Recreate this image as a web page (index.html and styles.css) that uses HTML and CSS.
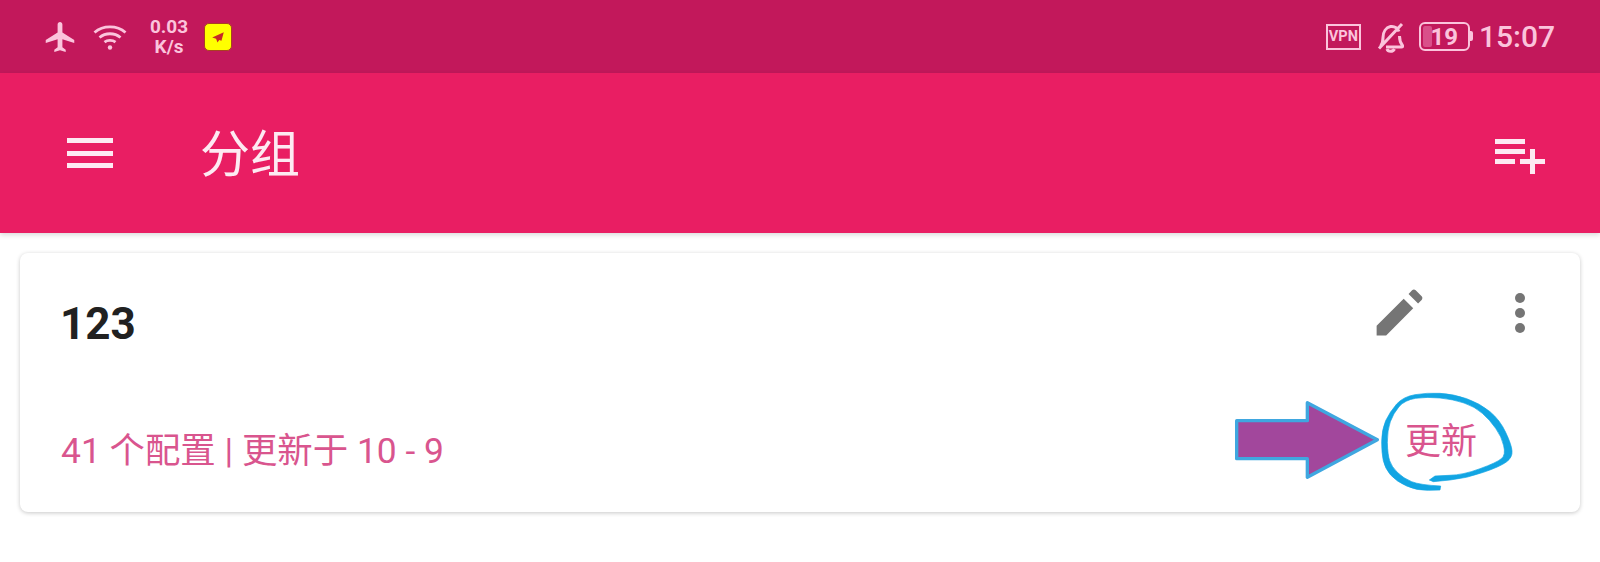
FILE: index.html
```html
<!DOCTYPE html>
<html>
<head>
    <title>分组</title>
    <meta charset="utf-8">
    <link rel="stylesheet" href="styles.css">
</head>
<body>
    <div class="status-bar">
        <div class="status-left">
            <svg class="ic-plane" viewBox="0 0 24 24"><path d="M21.500 16v-2L13.600 9V3.600c0-.9-.7-1.600-1.600-1.600s-1.600.7-1.600 1.600V9L2.500 14v2l7.900-2.500v5.400l-2.200 1.600V22l3.800-1.100 3.800 1.100v-1.500l-2.200-1.600v-5.400z"/></svg>
            <svg class="ic-wifi" viewBox="0 0 34 26">
                <path d="M1.500 8.500C10 1 24 1 32.500 8.500M6.500 13.500C12.500 8.500 21.500 8.500 27.500 13.500M11.500 18.200C14.500 15.800 19.500 15.800 22.500 18.200"/>
                <circle cx="17" cy="23.500" r="2.200"/>
            </svg>
            <div class="speed"><span>0.03</span><span>K/s</span></div>
            <div class="app-badge">
                <svg viewBox="0 0 27 27"><path d="M19.500 8.500L7.500 14l4 1.200 1.500 4 1.800-2.500 2.300.8z"/></svg>
            </div>
        </div>
        <div class="status-right">
            <span class="vpn">VPN</span>
            <svg class="ic-bell" viewBox="0 0 28 32">
                <path d="M4.500 25.500c2-2.500 2.500-4.500 2.500-9 0-5.500 3-10 7.500-11 4-.5 7 1.500 8.500 5M23.500 15c0 4.500.5 6.500 3 9.500.6 1-.1 1.500-1 1.500H10M3 27.500L26 3"/>
                <path d="M11 28c1 3 6 3 7.500 0"/>
            </svg>
            <div class="battery"><span class="battery-level"></span><span class="battery-num">19</span></div>
            <span class="clock">15:07</span>
        </div>
    </div>

    <div class="toolbar">
        <svg class="ic-menu" viewBox="0 0 46 30"><path d="M0 0h46v5H0zM0 13h46v5H0zM0 25h46v5H0z"/></svg>
        <h1>分组</h1>
        <svg class="ic-add" viewBox="0 0 50 38"><path d="M0 0h30v5H0zM0 10h30v5H0zM0 20h20v5H0zM35 10h5v10h10v5H40v10h-5V25H25v-5h10z"/></svg>
    </div>

    <div class="card">
        <div class="card-top">
            <div class="card-title">123</div>
            <svg class="ic-edit" viewBox="0 0 24 24"><path d="M3 17.250V21h3.750L17.400 10.350l-3.750-3.750zM20.710 7.040c.39-.39.39-1.020 0-1.410l-2.340-2.340c-.39-.39-1.020-.39-1.410 0l-1.400 1.400 3.750 3.750z"/></svg>
            <svg class="ic-more" viewBox="0 0 10 40"><circle cx="5" cy="5" r="5"/><circle cx="5" cy="20" r="5"/><circle cx="5" cy="35" r="5"/></svg>
        </div>
        <div class="card-bottom">
            <span class="card-info">41 个配置 | 更新于 10 - 9</span>
            <span class="update-btn">更新</span>
        </div>
    </div>

    <!-- 手绘标注 -->
    <svg class="annotation" viewBox="0 0 1020 420">
        <path class="arrow" d="M110 152H322V98L532 209 322 322V266H110z"/>
        <path class="scribble" d="M722 348L720 360 685 361Q650 362 620 348 590 335 572 315 555 295 550 272 545 250 545 215 545 180 557 152 570 125 590 102 610 80 645 74 680 68 720 70 760 72 800 86 840 100 870 125 900 150 917 187 935 225 936 243 938 262 919 276 900 290 850 307 800 325 750 330L700 335 688 330 705 318 747 316Q790 315 840 296 890 278 904 266 918 255 911 227 905 200 887 175 870 150 847 130 825 110 792 99 760 88 720 84 680 80 647 85 615 90 597 110 580 130 571 155 562 180 562 217 563 255 569 272 575 290 592 307 610 325 635 335 660 345 722 348z"/>
    </svg>
</body>
</html>
```

FILE: styles.css
```css
body {
    margin: 0;
    height: 562px;
    overflow: hidden;
    position: relative;
    background-color: white;
    font-family: Roboto, "Noto Sans CJK SC", sans-serif;
}
.status-bar {
    height: 73px;
    background-color: #c2185b;
    color: #fbc4dc;
    display: flex;
    justify-content: space-between;
    align-items: center;
    padding: 0 45px 0 44px;
}
.status-left,
.status-right {
    display: flex;
    align-items: center;
}
.ic-plane {
    width: 36px;
    height: 36px;
    margin-left: -2px;
    fill: #fbc4dc;
}
.ic-wifi {
    width: 34px;
    height: 26px;
    margin-left: 15px;
    fill: #fbc4dc;
}
.ic-wifi path {
    fill: none;
    stroke: #fbc4dc;
    stroke-width: 2.8;
}
.speed {
    width: 40px;
    margin-left: 22px;
    display: flex;
    flex-direction: column;
    align-items: center;
    font-size: 19px;
    font-weight: 700;
    line-height: 20px;
}
.app-badge {
    width: 28px;
    height: 28px;
    margin-left: 15px;
    box-sizing: border-box;
    background-color: #ffff00;
    border: 1px solid #a8421f;
    border-radius: 5px;
    display: flex;
}
.app-badge svg {
    width: 100%;
    fill: #c62828;
}
.vpn {
    width: 35px;
    height: 26px;
    box-sizing: border-box;
    border: 2px solid #fbc4dc;
    font-size: 14.5px;
    font-weight: 700;
    line-height: 22px;
    text-align: center;
}
.ic-bell {
    width: 28px;
    height: 32px;
    margin-left: 15px;
    fill: none;
    stroke: #fbc4dc;
    stroke-width: 3;
}
.battery {
    width: 51px;
    height: 29px;
    margin-left: 15px;
    box-sizing: border-box;
    border: 2.5px solid #fbc4dc;
    border-radius: 6px;
    position: relative;
    display: flex;
    align-items: center;
    justify-content: center;
    font-size: 24px;
    font-weight: 700;
}
.battery::after {
    content: "";
    position: absolute;
    right: -5px;
    top: 7px;
    width: 3px;
    height: 10px;
    background-color: #fbc4dc;
    border-radius: 0 2px 2px 0;
}
.battery-level {
    position: absolute;
    left: 2px;
    top: 2px;
    bottom: 2px;
    width: 9px;
    background-color: #d9508a;
    border-radius: 2px;
}
.battery-num {
    position: relative;
}
.clock {
    margin-left: 9px;
    font-size: 30px;
    font-weight: 500;
    line-height: 36px;
}
.toolbar {
    height: 160px;
    background-color: #e91e63;
    color: #fdeaf2;
    display: flex;
    align-items: center;
    padding: 0 55px 0 67px;
    box-shadow: 0 2px 5px rgba(0,0,0,0.15);
    position: relative;
}
.toolbar h1 {
    margin: 4px 0 0 87px;
    flex: 1;
    font-size: 50px;
    font-weight: 400;
    line-height: 60px;
}
.ic-menu {
    width: 46px;
    height: 30px;
    fill: #fdeaf2;
}
.ic-add {
    width: 50px;
    height: 38px;
    margin-top: 9px;
    fill: #fdeaf2;
}
.card {
    margin: 20px 20px 0;
    height: 259px;
    box-sizing: border-box;
    background-color: white;
    border-radius: 8px;
    box-shadow: 0 1px 4px rgba(0,0,0,0.22);
    padding: 29px 55px 0 40px;
}
.card-top {
    display: flex;
    align-items: flex-start;
}
.card-title {
    flex: 1;
    margin-top: 16px;
    font-size: 44px;
    font-weight: 700;
    line-height: 52px;
    color: #212121;
}
.ic-edit {
    width: 61px;
    height: 61px;
    fill: #757575;
}
.ic-more {
    width: 10px;
    height: 40px;
    margin: 11px 0 0 85px;
    fill: #757575;
}
.card-bottom {
    margin-top: 66px;
    display: flex;
    justify-content: space-between;
    color: #d9558e;
    font-size: 35.4px;
    line-height: 48px;
}
.card-info {
    margin: 11px 0 0 1px;
}
.update-btn {
    margin: 2px 48px 0 0;
    font-size: 36px;
}
.annotation {
    position: absolute;
    left: 1200px;
    top: 370px;
    width: 340px;
    height: 140px;
}
.annotation .arrow {
    fill: #a2479c;
    stroke: #3fa7e0;
    stroke-width: 10;
    stroke-linejoin: round;
}
.annotation .scribble {
    fill: #12a5e3;
    stroke: #12a5e3;
    stroke-width: 2;
    stroke-linejoin: round;
}
```
